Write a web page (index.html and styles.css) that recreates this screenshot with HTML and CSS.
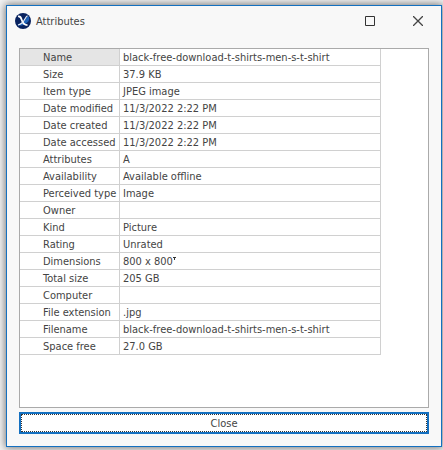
FILE: index.html
```html
<!DOCTYPE html>
<html lang="en">
<head>
<meta charset="utf-8">
<title>Attributes</title>
<link rel="stylesheet" href="styles.css">
</head>
<body>
<main class="window">
  <header class="titlebar">
    <svg class="logo" viewBox="0 0 16 16" aria-hidden="true">
      <circle cx="8" cy="8" r="8" fill="#08225f"/>
      <path d="M8 9.500 C10 7 11 4.500 13.500 3 C15 6 14 9 11 10.500 C9 12 5 13.500 2.500 12 C5 11.500 7 10.500 8 9.500Z" fill="#1f62b8"/>
      <path d="M3 3.500 C5.500 3 6 4.500 6.800 7 C7.600 10 8.500 12 12.500 12.200" fill="none" stroke="#fff" stroke-width="1.700"/>
      <path d="M12.500 2.800 C10.500 4 9.500 7.500 7.500 9.500 C6 11 4.500 11.800 3 12" fill="none" stroke="#e4eefb" stroke-width="1.200"/>
    </svg>
    <h1 class="title">Attributes</h1>
    <button class="tool" type="button" aria-label="Maximize">
      <svg class="glyph" viewBox="0 0 10 10"><path d="M.5 .5h9v9h-9z" fill="none" stroke="#333"/></svg>
    </button>
    <button class="tool" type="button" aria-label="Close window">
      <svg class="glyph" viewBox="0 0 10 10"><path d="M0 0L10 10M10 0L0 10" fill="none" stroke="#444" stroke-width="1.300"/></svg>
    </button>
  </header>
  <section class="panel">
    <table class="attributes">
      <colgroup><col class="names"><col class="values"></colgroup>
      <tbody>
        <tr class="selected"><th scope="row">Name</th><td>black-free-download-t-shirts-men-s-t-shirt</td></tr>
        <tr><th scope="row">Size</th><td>37.9 KB</td></tr>
        <tr><th scope="row">Item type</th><td>JPEG image</td></tr>
        <tr><th scope="row">Date modified</th><td>11/3/2022 2:22 PM</td></tr>
        <tr><th scope="row">Date created</th><td>11/3/2022 2:22 PM</td></tr>
        <tr><th scope="row">Date accessed</th><td>11/3/2022 2:22 PM</td></tr>
        <tr><th scope="row">Attributes</th><td>A</td></tr>
        <tr><th scope="row">Availability</th><td>Available offline</td></tr>
        <tr><th scope="row">Perceived type</th><td>Image</td></tr>
        <tr><th scope="row">Owner</th><td></td></tr>
        <tr><th scope="row">Kind</th><td>Picture</td></tr>
        <tr><th scope="row">Rating</th><td>Unrated</td></tr>
        <tr><th scope="row">Dimensions</th><td>800 x 800<svg class="mark" viewBox="0 0 3 8" aria-hidden="true"><path d="M0 .5h3M1.500 0v3" fill="none" stroke="#333"/></svg></td></tr>
        <tr><th scope="row">Total size</th><td>205 GB</td></tr>
        <tr><th scope="row">Computer</th><td></td></tr>
        <tr><th scope="row">File extension</th><td>.jpg</td></tr>
        <tr><th scope="row">Filename</th><td>black-free-download-t-shirts-men-s-t-shirt</td></tr>
        <tr><th scope="row">Space free</th><td>27.0 GB</td></tr>
      </tbody>
    </table>
  </section>
  <button class="close" type="button"><span class="focus">Close</span></button>
</main>
</body>
</html>
```
FILE: styles.css
```css
* { box-sizing: border-box; }

body {
  margin: 0;
  min-height: 100vh;
  display: flex;
  padding: 5px 1px 3px 6px;
  background: #f4f4f4;
  color: #444;
  font: 11px/14px Tahoma, "DejaVu Sans Condensed", sans-serif;
}

.window {
  flex: 1;
  min-width: 0;
  display: flex;
  flex-direction: column;
  padding: 0 12px 12px;
  border: 1px solid #1470c0;
  background: #f8f8f8;
  box-shadow: 0 0 8px 1px #777;
}

.titlebar {
  display: flex;
  align-items: center;
  height: 30px;
  margin: 0 -12px 12px;
  padding-left: 8px;
}

.logo { width: 16px; height: 16px; }

.title {
  flex: 1;
  margin: 0 0 0 5px;
  padding-top: 2px;
  font-size: 11px;
  font-weight: 400;
}

.tool {
  width: 48px;
  height: 30px;
  padding: 0 0 0 2px;
  border: 0;
  background: none;
}

.glyph {
  display: block;
  width: 10px;
  height: 10px;
  margin: auto;
}

.panel {
  flex: 1;
  border: 1px solid #aaa;
  background: #fff;
}

.attributes {
  width: 361px;
  table-layout: fixed;
  border-spacing: 0;
}

.names { width: 100px; }

.attributes th,
.attributes td {
  height: 17px;
  padding: 2px 0 0 3px;
  border: solid #d0d0d0;
  border-width: 0 1px 1px 0;
  font-weight: 400;
  text-align: left;
  white-space: nowrap;
}

.attributes th { padding-left: 23px; }

.selected th { background: #e5e5e5; }

.mark { width: 3px; height: 8px; }

.close {
  display: flex;
  height: 22px;
  margin-top: 4px;
  padding: 0;
  border: 2px solid #1470c0;
  background: #fff;
  color: inherit;
  font: inherit;
}

.focus {
  flex: 1;
  height: 18px;
  padding-top: 2px;
  border: 1px dotted #333;
}
```
